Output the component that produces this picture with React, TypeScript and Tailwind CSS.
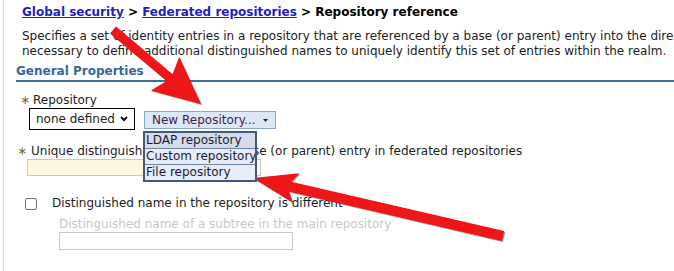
import React from "react";

type Pt = [number, number];

// polygon for a hand-drawn style arrow: shaft from s to the tip t
function arrowPoints(s: Pt, t: Pt, w: number, L: number, H: number, notch: number) {
  const dx = t[0] - s[0];
  const dy = t[1] - s[1];
  const len = Math.hypot(dx, dy);
  const ux = dx / len;
  const uy = dy / len;
  const px = -uy;
  const py = ux;
  const bx = t[0] - ux * L;
  const by = t[1] - uy * L;
  const jx = bx + ux * notch;
  const jy = by + uy * notch;
  const pts: Pt[] = [
    [s[0] + (px * w) / 2, s[1] + (py * w) / 2],
    [jx + (px * w) / 2, jy + (py * w) / 2],
    [bx + px * H, by + py * H],
    t,
    [bx - px * H, by - py * H],
    [jx - (px * w) / 2, jy - (py * w) / 2],
    [s[0] - (px * w) / 2, s[1] - (py * w) / 2],
  ];
  return pts.map((p) => `${p[0].toFixed(1)},${p[1].toFixed(1)}`).join(" ");
}

const MENU = ["LDAP repository", "Custom repository", "File repository"];

function Star({ className = "" }: { className?: string }) {
  return <span className={`inline-block text-[12px] leading-[15px] text-[#7d6a1c] ${className}`}>∗</span>;
}

export default function App() {
  return (
    <div className="relative h-[271px] w-[674px] overflow-hidden bg-white font-['DejaVu_Sans',sans-serif] text-[12px] leading-[15px] text-[#222]">
      <div className="ml-[3px] h-full border-l border-[#d2d2d2] pl-[12px]">
        {/* breadcrumb */}
        <div className="whitespace-nowrap pl-[6px] pt-[5px] font-bold text-black">
          <a className="text-[#1f1fbf] underline">Global security</a> &gt;{" "}
          <a className="text-[#1f1fbf] underline">Federated repositories</a> &gt; Repository reference
        </div>

        <p className="mt-[9px] whitespace-nowrap pl-[6px]">
          Specifies a set of identity entries in a repository that are referenced by a base (or parent) entry into the dire
          <br />
          necessary to define additional distinguished names to uniquely identify this set of entries within the realm.
        </p>

        <h2 className="mt-[5px] border-b-2 border-[#3e6ea0] pb-[1px] font-bold text-[#36679a]">General Properties</h2>

        {/* Repository */}
        <div className="mt-[11px] flex items-center pl-[4px]">
          <Star className="w-[13px]" />
          <span>Repository</span>
        </div>
        <div className="ml-[13px] flex items-start">
          <div className="flex h-[22px] w-[106px] items-center justify-between border border-black pl-[6px] pr-[6px]">
            <span>none defined</span>
            <svg width="8" height="6" viewBox="0 0 8 6">
              <path d="M1 1 L4 4 L7 1" fill="none" stroke="#111" strokeWidth="2" />
            </svg>
          </div>
          <div className="relative ml-[9px] mt-[3px]">
            <div className="flex h-[18px] w-[132px] items-center justify-between border border-[#8aa6cc] bg-[#dde8f6] pl-[7px] pr-[7px] text-[#4c1c3e]">
              <span>New Repository...</span>
              <svg width="5" height="3" viewBox="0 0 5 3">
                <path d="M0 0 L5 0 L2.5 3 Z" fill="#222" />
              </svg>
            </div>
            <ul className="absolute left-[-1px] top-[20px] z-10 w-[114px] overflow-hidden whitespace-nowrap border-2 border-[#46587a] text-[#1b1b33]">
              {MENU.map((m, i) => (
                <li
                  key={m}
                  className={
                    i === 0
                      ? "h-[15px] bg-[#d4dcea] pl-[1px] leading-[15px]"
                      : "h-[16px] border-t border-[#6f84a6] bg-[#e6edf9] pl-[1px] leading-[15px]"
                  }
                >
                  {m}
                </li>
              ))}
            </ul>
          </div>
        </div>

        {/* Unique DN */}
        <div className="mt-[14px] flex items-center whitespace-nowrap pl-[1px]">
          <Star className="w-[14px]" />
          <span>Unique distinguished name of the base (or parent) entry in federated repositories</span>
        </div>
        <div className="ml-[11px] h-[17px] w-[234px] border border-[#c8c8c8] bg-[#fff7df]" />

        {/* checkbox */}
        <div className="mt-[20px] flex items-center">
          <div className="ml-[9px] h-[12px] w-[12px] rounded-[2px] border border-[#707070] bg-white" />
          <span className="ml-[15px]">Distinguished name in the repository is different</span>
        </div>
        <div className="ml-[43px] mt-[6px] text-[#c8c8c8]">Distinguished name of a subtree in the main repository</div>
        <div className="ml-[43px] h-[18px] w-[234px] border border-[#c8c8c8]" />
      </div>

      {/* annotation arrows */}
      <svg className="pointer-events-none absolute left-0 top-0" width="674" height="271">
        <defs>
          <filter id="sh" x="-10%" y="-10%" width="120%" height="120%">
            <feDropShadow dx="1" dy="1" stdDeviation="0.7" floodColor="#000" floodOpacity="0.45" />
          </filter>
        </defs>
        <polygon points={arrowPoints([113, 30], [201, 104], 9, 47, 22, 6)} fill="#ee1212" filter="url(#sh)" />
        <polygon points={arrowPoints([503, 236], [253, 178], 10, 44, 15, 6)} fill="#ee1212" filter="url(#sh)" />
      </svg>
    </div>
  );
}
